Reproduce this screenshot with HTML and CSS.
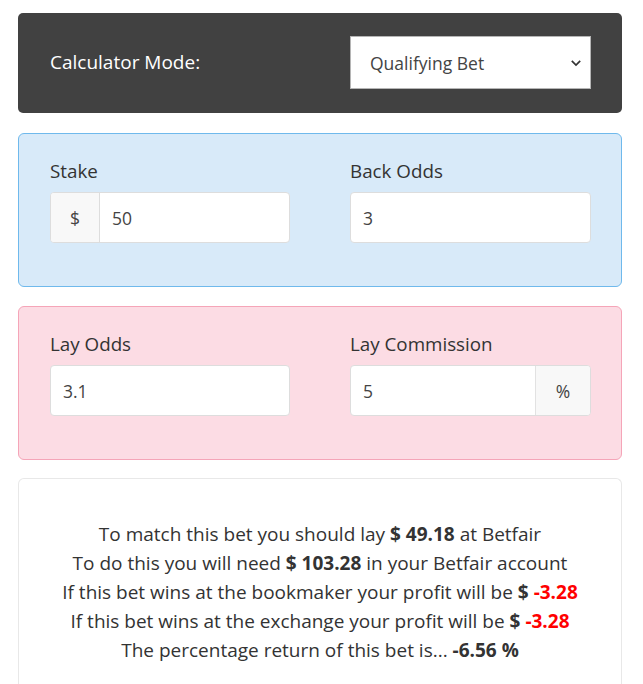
FILE: index.html
```html
<!DOCTYPE html>
<html>
<head>
<meta charset="utf-8">
<link rel="stylesheet" href="styles.css">
</head>
<body>
<div class="calc">
  <div class="mode-panel">
    <div class="mode-label">Calculator Mode:</div>
    <div class="select">
      <span>Qualifying Bet</span>
      <svg class="chev" width="12" height="8" viewBox="0 0 12 8"><path d="M1.8 1.8 L6 6 L10.2 1.8" fill="none" stroke="#333" stroke-width="1.7"/></svg>
    </div>
  </div>

  <div class="panel back">
    <div class="field">
      <label class="flabel">Stake</label>
      <div class="group">
        <span class="addon left">$</span>
        <input class="inp" type="text" value="50">
      </div>
    </div>
    <div class="field">
      <label class="flabel">Back Odds</label>
      <div class="group">
        <input class="inp" type="text" value="3">
      </div>
    </div>
  </div>

  <div class="panel lay">
    <div class="field">
      <label class="flabel">Lay Odds</label>
      <div class="group">
        <input class="inp" type="text" value="3.1">
      </div>
    </div>
    <div class="field">
      <label class="flabel">Lay Commission</label>
      <div class="group">
        <input class="inp" type="text" value="5">
        <span class="addon right">%</span>
      </div>
    </div>
  </div>

  <div class="results">
    <p>To match this bet you should lay <b>$ 49.18</b> at Betfair</p>
    <p>To do this you will need <b>$ 103.28</b> in your Betfair account</p>
    <p>If this bet wins at the bookmaker your profit will be <b>$ <span class="neg">-3.28</span></b></p>
    <p>If this bet wins at the exchange your profit will be <b>$ <span class="neg">-3.28</span></b></p>
    <p>The percentage return of this bet is... <b>-6.56 %</b></p>
  </div>
</div>
</body>
</html>
```
FILE: styles.css
```css
html, body {
  margin: 0;
  padding: 0;
  background: #ffffff;
}
body {
  font-family: "Open Sans", "Liberation Sans", sans-serif;
  color: #333333;
}
.calc {
  padding: 13px 21px 0 18px;
}
.mode-panel {
  background: #414141;
  border-radius: 5px;
  height: 100px;
  box-sizing: border-box;
  padding: 23px 31px 0 32px;
  display: grid;
  grid-template-columns: 240px 241px;
  column-gap: 60px;
  align-items: start;
  margin-bottom: 20px;
}
.mode-label {
  color: #ffffff;
  font-size: 19px;
  font-weight: 400;
  line-height: 53px;
}
.select {
  height: 53px;
  box-sizing: border-box;
  background: #ffffff;
  border: 1px solid #b5b5b5;
  display: flex;
  align-items: center;
  justify-content: space-between;
  padding: 0 8px 0 19px;
  font-size: 17.5px;
  color: #444;
}
.chev {
  display: block;
}
.panel {
  border-radius: 6px;
  box-sizing: border-box;
  height: 154px;
  padding: 24px 31px 0 31px;
  display: grid;
  grid-template-columns: 240px 241px;
  column-gap: 60px;
  align-items: start;
}
.back {
  background: #d8eaf9;
  border: 1px solid #6fb9ec;
  margin-bottom: 19px;
}
.lay {
  background: #fcdce4;
  border: 1px solid #f5a5b8;
  margin-bottom: 18px;
}
.field {
  display: flex;
  flex-direction: column;
}
.flabel {
  font-size: 18.8px;
  line-height: 27px;
  color: #333;
  margin-bottom: 7px;
}
.group {
  display: flex;
  height: 51px;
  box-sizing: border-box;
  border: 1px solid #dddddd;
  border-radius: 4px;
  background: #ffffff;
  overflow: hidden;
}
.inp {
  flex: 1;
  min-width: 0;
  border: 0;
  outline: none;
  background: transparent;
  font-family: "Open Sans", "Liberation Sans", sans-serif;
  font-size: 17.5px;
  color: #444;
  padding: 0 12px;
  margin: 0;
}
.addon {
  background: #f8f8f8;
  display: flex;
  align-items: center;
  justify-content: center;
  font-size: 17.5px;
  color: #444;
  width: 48px;
  flex: none;
}
.addon.left {
  border-right: 1px solid #dddddd;
}
.addon.right {
  border-left: 1px solid #e2e2e2;
  width: 54px;
}
.results {
  border: 1px solid #e8e8e8;
  border-bottom: 0;
  border-radius: 6px 6px 0 0;
  padding-top: 41px;
  height: 300px;
  text-align: center;
}
.results p {
  margin: 0;
  font-size: 19px;
  line-height: 29px;
  color: #333;
}
.results b {
  font-weight: 700;
}
.neg {
  color: #ff0000;
}
```
